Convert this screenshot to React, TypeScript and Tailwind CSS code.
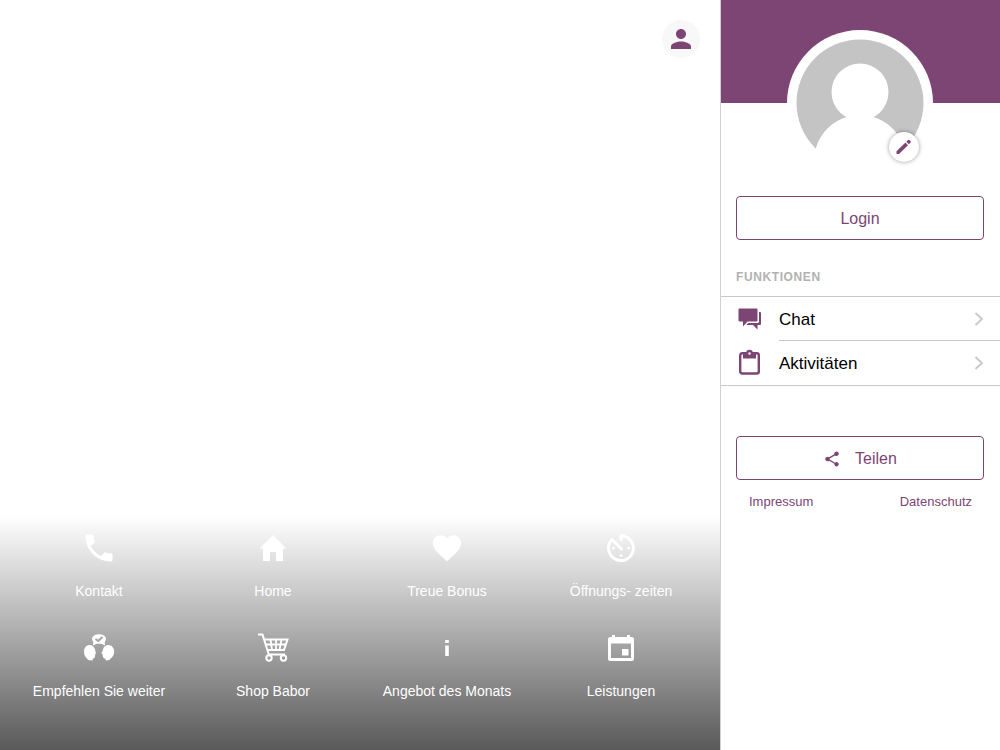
import type { ReactNode } from "react";
import { MdFavorite, MdPerson, MdPhone, MdShare } from "react-icons/md";

const HouseIcon = () => (
  <svg viewBox="0 0 32 32" className="w-8 h-8" fill="currentColor">
    <path d="M16 3L2.500 16.500H6V29H13V20H19V29H26V16.500H29.500Z" />
  </svg>
);

const TimerIcon = () => (
  <svg viewBox="0 0 32 32" className="w-8 h-8" fill="none" stroke="currentColor">
    <path
      d="M16 7.500V3.700A12.400 12.400 0 1 1 7 7.500L16.500 17"
      strokeWidth="3"
      strokeLinejoin="round"
      strokeLinecap="round"
    />
    <g fill="currentColor" stroke="none">
      <circle cx="8.300" cy="16" r="1.500" />
      <circle cx="23.700" cy="16" r="1.500" />
      <circle cx="16" cy="23.500" r="1.500" />
    </g>
  </svg>
);

const ReferIcon = () => (
  <svg viewBox="0 0 32 32" className="w-8 h-8" fill="currentColor">
    <ellipse cx="16" cy="7" rx="7" ry="4.800" />
    <path d="M10.500 8L10 13.500L15 11ZM21.500 8L22 13.500L17 11Z" />
    <path d="M12.500 7L15.200 9L19.500 5" fill="none" stroke="#a5a5a5" strokeWidth="2" />
    <path d="M6.500 13C9.800 13 12 15.500 12.200 18.800L13.200 21.200L12.200 22C12.200 25 11.700 26.500 9.800 26.700L9.500 28.500L5 28L4 26.500C2 25 1 22.500 1 19.800C1 15.800 3.300 13 6.500 13Z" />
    <path d="M25.500 13C22.200 13 20 15.500 19.800 18.800L18.200 21.200L19.600 22C19.600 25 20.300 26.500 22.200 26.700L23 28.500L26.500 28L27.500 26.500C30 25 31.200 22.500 31.200 19.800C31.200 15.800 28.700 13 25.500 13Z" />
  </svg>
);

const CartIcon = () => (
  <svg viewBox="0 0 32 32" className="w-8 h-8" fill="none" stroke="currentColor">
    <path d="M1 2.500H5.500L11.800 22.500H28" strokeWidth="2" />
    <path d="M7 7.500H30.500L27 18H10.500" strokeWidth="2" />
    <path d="M8.500 12.500H28.500M13.500 7.500L15 18M19 7.500V18M24.500 7.500L22.500 18" strokeWidth="1.800" />
    <circle cx="12" cy="26" r="2.700" strokeWidth="2" />
    <circle cx="26.500" cy="26" r="2.700" strokeWidth="2" />
  </svg>
);

const InfoIcon = () => (
  <svg viewBox="0 0 32 32" className="w-8 h-8" fill="currentColor">
    <path d="M14.200 8H17.800V11H14.200ZM14.200 13.500H17.800V24H14.200Z" />
  </svg>
);

const CalendarIcon = () => (
  <svg viewBox="0 0 32 32" className="w-8 h-8" fill="currentColor">
    <path
      fillRule="evenodd"
      d="M7 3H10V5H22V3H25V5H26.500Q29 5 29 7.500V26.500Q29 29 26.500 29H5.500Q3 29 3 26.500V7.500Q3 5 5.500 5H7ZM6 11.500V26H26V11.500ZM17 17H23.500V23.500H17Z"
    />
  </svg>
);

const ChatIcon = () => (
  <svg viewBox="0 0 28 28" className="w-7 h-7" fill="currentColor">
    <path d="M3.500 3.500H20.500Q21.500 3.500 21.500 4.500V15.500Q21.500 16.500 20.500 16.500H11.500L7 21.500V16.500H3.500Q2.500 16.500 2.500 15.500V4.500Q2.500 3.500 3.500 3.500Z" />
    <path d="M23 7H24Q25 7 25 8V19Q25 20 24 20H21.500V24.500L17 20H10.500Q11 18 13 18H21.500Q23 18 23 16.500Z" />
  </svg>
);

const ClipboardIcon = () => (
  <svg viewBox="0 0 28 28" className="w-7 h-7">
    <rect x="4.200" y="4.200" width="18.600" height="20.300" rx="2" fill="none" stroke="currentColor" strokeWidth="2.400" />
    <path d="M7 4H20V9.500H7Z" fill="currentColor" />
    <circle cx="13.500" cy="4" r="3.300" fill="currentColor" />
    <circle cx="13.500" cy="4.500" r="1.200" fill="#fff" />
  </svg>
);

const PencilIcon = () => (
  <svg viewBox="0 0 20 20" className="w-5 h-5" fill="currentColor">
    <path d="M2.500 14.200L11.500 5.500L14 8.200L5 17H2.500Z" />
    <path d="M12.300 4.700L14 3Q14.700 2.400 15.400 3L16.600 4.200Q17.200 4.900 16.600 5.600L14.900 7.300Z" />
  </svg>
);

const Chevron = () => (
  <svg viewBox="0 0 12 16" className="w-3 h-4" fill="none" stroke="#c7c7cc" strokeWidth="1.800">
    <path d="M2.500 1L9 7L2.500 13" />
  </svg>
);

const Avatar = () => (
  <svg viewBox="0 0 146 146" className="w-full h-full">
    <circle cx="73" cy="73" r="73" fill="#fff" />
    <circle cx="73" cy="73" r="63.500" fill="#c4c4c4" />
    <circle cx="73" cy="62" r="28.500" fill="#fff" />
    <circle cx="73" cy="131" r="46" fill="#fff" />
  </svg>
);

const tiles: { label: string; icon: ReactNode }[] = [
  { label: "Kontakt", icon: <MdPhone className="w-9 h-9" /> },
  { label: "Home", icon: <HouseIcon /> },
  { label: "Treue Bonus", icon: <MdFavorite className="w-[34px] h-[34px]" /> },
  { label: "Öffnungs- zeiten", icon: <TimerIcon /> },
  { label: "Empfehlen Sie weiter", icon: <ReferIcon /> },
  { label: "Shop Babor", icon: <CartIcon /> },
  { label: "Angebot des Monats", icon: <InfoIcon /> },
  { label: "Leistungen", icon: <CalendarIcon /> },
];

const features: { label: string; icon: ReactNode }[] = [
  { label: "Chat", icon: <ChatIcon /> },
  { label: "Aktivitäten", icon: <ClipboardIcon /> },
];

const HomeView = () => (
  <main className="flex flex-1 flex-col justify-between">
    <div className="flex justify-end p-5">
      <button
        aria-label="Profil"
        className="flex w-[38px] h-[38px] items-center justify-center rounded-full bg-[#f8f8f8] text-[#7d4574]"
      >
        <MdPerson className="w-[30px] h-[30px]" />
      </button>
    </div>
    <nav className="grid grid-cols-4 gap-y-[29px] px-3 pt-4 pb-[47px] bg-linear-to-b/srgb from-black/0 to-black/65">
      {tiles.map((tile) => (
        <a key={tile.label} href="#" className="flex flex-col items-center text-white">
          <span className="flex h-8 items-center">{tile.icon}</span>
          <span className="mt-[15px] text-sm leading-6">{tile.label}</span>
        </a>
      ))}
    </nav>
  </main>
);

const Sidebar = () => (
  <aside className="w-[280px] shrink-0 border-l border-[#d0d0d0] bg-white text-[#7d4574]">
    <div className="h-[103px] bg-[#7d4574]" />
    <div className="relative ml-[66px] -mt-[73px] w-[146px] h-[146px]">
      <Avatar />
      <button
        aria-label="Profil bearbeiten"
        className="absolute right-3.5 bottom-3.5 flex w-[30px] h-[30px] items-center justify-center rounded-full bg-white shadow-[0_0_4px_rgba(0,0,0,0.4)]"
      >
        <PencilIcon />
      </button>
    </div>
    <div className="pl-[15px] pr-4 pt-5">
      <button className="w-full h-11 rounded border border-[#7d4574] pt-px text-base">
        Login
      </button>
    </div>
    <h2 className="mt-7 pl-[15px] pb-2.5 text-xs leading-[18px] font-bold tracking-wider text-[#b2b2b2]">
      FUNKTIONEN
    </h2>
    <ul className="border-y border-[#c8c7cc] text-[17px] text-black">
      {features.map((feature) => (
        <li key={feature.label} className="group">
          <a href="#" className="flex pl-[15px]">
            <span className="flex w-[43px] items-center text-[#7d4574]">{feature.icon}</span>
            <span className="flex h-11 flex-1 items-center justify-between border-b border-[#c8c7cc] pt-0.5 pr-[15px] group-last:border-b-0">
              {feature.label}
              <Chevron />
            </span>
          </a>
        </li>
      ))}
    </ul>
    <div className="pl-[15px] pr-4 pt-[50px]">
      <button className="flex w-full h-11 items-center justify-center gap-3.5 rounded border border-[#7d4574] pt-px text-base">
        <MdShare className="w-[18px] h-[18px]" />
        Teilen
      </button>
    </div>
    <div className="flex justify-between px-7 pt-3 text-[13px] leading-5">
      <a href="#">Impressum</a>
      <a href="#">Datenschutz</a>
    </div>
  </aside>
);

const App = () => {
  return (
    <div className="flex min-h-screen bg-white font-['Liberation_Sans',Arial,sans-serif]">
      <HomeView />
      <Sidebar />
    </div>
  );
};

export default App;
